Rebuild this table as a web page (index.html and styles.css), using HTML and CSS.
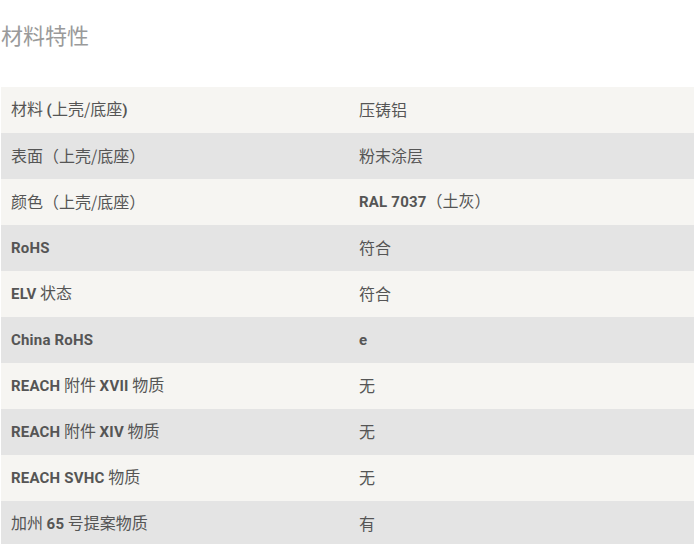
FILE: index.html
```html
<!DOCTYPE html>
<html lang="zh-CN">
<head>
<meta charset="utf-8">
<link rel="stylesheet" href="styles.css">
</head>
<body>
<div class="page">
  <h2 class="title">材料特性</h2>
  <table class="props">
    <tr><td>材料 <span class="lat">(</span>上壳/底座<span class="lat">)</span></td><td>压铸铝</td></tr>
    <tr><td>表面（上壳/底座）</td><td>粉末涂层</td></tr>
    <tr><td>颜色（上壳/底座）</td><td><span class="lat">RAL 7037</span>（土灰）</td></tr>
    <tr><td><span class="lat">RoHS</span></td><td>符合</td></tr>
    <tr><td><span class="lat">ELV</span> 状态</td><td>符合</td></tr>
    <tr><td><span class="lat">China RoHS</span></td><td><span class="lat">e</span></td></tr>
    <tr><td><span class="lat">REACH</span> 附件 <span class="lat">XVII</span> 物质</td><td>无</td></tr>
    <tr><td><span class="lat">REACH</span> 附件 <span class="lat">XIV</span> 物质</td><td>无</td></tr>
    <tr><td><span class="lat">REACH SVHC</span> 物质</td><td>无</td></tr>
    <tr><td>加州 <span class="lat">65</span> 号提案物质</td><td>有</td></tr>
  </table>
</div>
</body>
</html>
```

FILE: styles.css
```css
html, body {
  margin: 0;
  padding: 0;
  background: #ffffff;
}
.page {
  padding-left: 1px;
  font-family: "Noto Sans CJK SC", sans-serif;
}
.title {
  margin: 0;
  padding-top: 19px;
  height: 87px;
  box-sizing: border-box;
  font-size: 22px;
  line-height: 30px;
  font-weight: 400;
  color: #9a9a9a;
}
.props {
  width: 693px;
  border-collapse: collapse;
  table-layout: fixed;
}
.props tr {
  height: 46px;
}
.props tr:nth-child(odd) {
  background: #f6f5f2;
}
.props tr:nth-child(even) {
  background: #e4e4e4;
}
.props td {
  padding: 0 10px 3px;
  font-size: 16px;
  color: #555555;
  vertical-align: middle;
  line-height: 20px;
}
.props td:first-child {
  width: 328px;
}
.lat {
  font-family: Roboto, "Liberation Sans", sans-serif;
  font-weight: 700;
  font-size: 15px;
  letter-spacing: 0.2px;
}
```
